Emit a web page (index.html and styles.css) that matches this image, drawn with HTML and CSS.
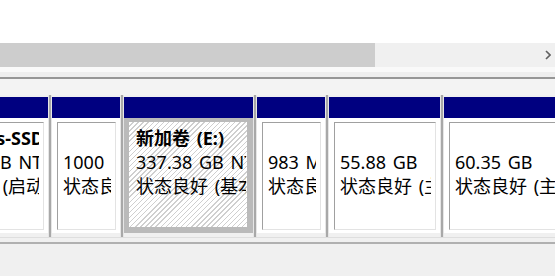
FILE: index.html
```html
<!DOCTYPE html>
<html lang="zh-CN">
<head>
<meta charset="utf-8">
<title>磁盘管理</title>
<link rel="stylesheet" href="styles.css">
</head>
<body>
<div class="top"></div>
<div class="hscroll">
  <div class="thumb"></div>
  <svg class="arrow" viewBox="0 0 6 10" width="6" height="10"><path d="M1 1 L5 5 L1 9" fill="none" stroke="#606060" stroke-width="1.6"/></svg>
</div>
<div class="b1"></div>
<div class="b2"></div>
<div class="rule"></div>
<div class="b3"></div>
<div class="row">
  <div class="part p0">
    <div class="head"></div>
    <div class="body"><div class="box">
      <div class="t bold">Windows-SSD (C:)</div>
      <div class="t">237.87 GB NTFS</div>
      <div class="t">状态良好 (启动, 页面文件, 故障转储, 基本数据分区)</div>
    </div></div>
  </div>
  <div class="split"></div>
  <div class="part p1">
    <div class="head"></div>
    <div class="body"><div class="box">
      <div class="t"></div>
      <div class="t">1000 MB</div>
      <div class="t">状态良好 (EFI 系统分区)</div>
    </div></div>
  </div>
  <div class="split"></div>
  <div class="part p2 sel">
    <div class="head"></div>
    <div class="body"><div class="box">
      <div class="t bold">新加卷 (E:)</div>
      <div class="t">337.38 GB NTFS</div>
      <div class="t">状态良好 (基本数据分区)</div>
    </div></div>
  </div>
  <div class="split"></div>
  <div class="part p3">
    <div class="head"></div>
    <div class="body"><div class="box">
      <div class="t"></div>
      <div class="t">983 MB</div>
      <div class="t">状态良好 (恢复分区)</div>
    </div></div>
  </div>
  <div class="split"></div>
  <div class="part p4">
    <div class="head"></div>
    <div class="body"><div class="box">
      <div class="t"></div>
      <div class="t">55.88 GB</div>
      <div class="t">状态良好 (主分区)</div>
    </div></div>
  </div>
  <div class="split"></div>
  <div class="part p5">
    <div class="head"></div>
    <div class="body"><div class="box">
      <div class="t"></div>
      <div class="t">60.35 GB</div>
      <div class="t">状态良好 (主分区)</div>
    </div></div>
  </div>
</div>
<div class="b4"></div>
<div class="rule2"></div>
</body>
</html>
```
FILE: styles.css
```css
html, body {
  margin: 0;
  padding: 0;
}
body {
  width: 555px;
  height: 276px;
  overflow: hidden;
  background: #f0f0f0;
  font-family: "Noto Sans", "Noto Sans CJK SC", sans-serif;
  font-size: 18px;
  color: #000;
}
.top {
  height: 43px;
  background: #fff;
}
.hscroll {
  height: 24px;
  background: #f0f0f0;
  display: flex;
  justify-content: space-between;
  align-items: center;
}
.thumb {
  width: 375px;
  align-self: stretch;
  background: #cdcdcd;
}
.arrow {
  margin-right: 4px;
  display: block;
}
.b1 { height: 5px; background: #f9f9f9; }
.b2 { height: 5px; background: #eeeeee; }
.rule { height: 2px; background: #969696; }
.b3 { height: 16px; background: #f3f3f3; }
.row {
  display: flex;
  height: 142px;
  margin-left: -87px;
  background: #f0f0f0;
}
.part {
  flex: none;
  display: flex;
  flex-direction: column;
  padding: 2px 0 4px;
}
.p0 { width: 135px; }
.p1 { width: 68px; }
.p2 { width: 129px; }
.p3 { width: 68px; }
.p4 { width: 111px; }
.p5 { width: 160px; }
.head {
  height: 21px;
  background: #000080;
}
.body {
  flex: 1;
  display: flex;
  background: #fff;
  padding: 4px 4px 3px 5px;
}
.box {
  flex: 1;
  min-width: 0;
  overflow: hidden;
  border: 1px solid;
  border-color: #a0a0a0 #e3e3e3 #e3e3e3 #a0a0a0;
  padding: 3px 4px 0 5px;
}
.sel .body {
  background: #bababa;
  padding: 4px 6px 6px 5px;
}
.sel .box {
  border: 0;
  padding: 4px 1px 0 7px;
  background: repeating-linear-gradient(135deg, #ffffff 0 2.6px, #cfcfcf 2.6px 3.6px);
}
.t {
  height: 24px;
  line-height: 24px;
  white-space: nowrap;
  overflow: hidden;
  word-spacing: 2px;
}
.bold { font-weight: bold; }
.split {
  flex: none;
  width: 4px;
  background: linear-gradient(to right, #e6e6e6 0 1px, #a8a8a8 1px 3px, #e6e6e6 3px);
}
.b4 {
  height: 4px;
  border-top: 1px solid #dedede;
  background: #f0f0f0;
}
.rule2 {
  height: 2px;
  background: #b0b0b0;
}
```
